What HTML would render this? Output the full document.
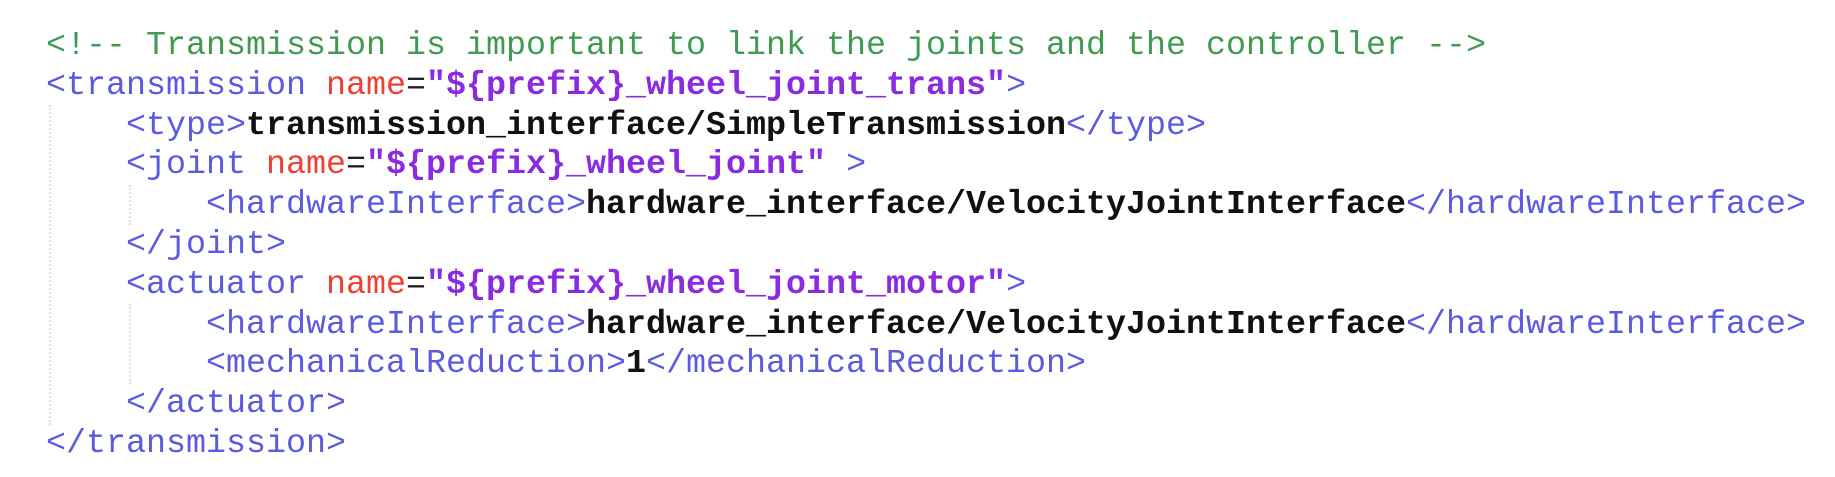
<!DOCTYPE html>
<html><head><meta charset="utf-8"><style>
html,body{margin:0;padding:0;background:#fff;width:1835px;height:477px;overflow:hidden}
pre{position:absolute;left:46px;top:27px;margin:0;font-family:"Liberation Mono","Courier New",monospace;font-size:33.33px;line-height:39.8px;color:#5b5be0;}
.c{color:#3f9a52}.a{color:#ee4033}.s{color:#8a2be2;font-weight:bold}.b{color:#111;font-weight:bold}.e{color:#222}
.g{position:absolute;width:0;border-left:2px dotted #ddd}
</style></head><body>
<div class="g" style="left:49px;top:105px;height:320px"></div>
<div class="g" style="left:129px;top:185px;height:40px"></div>
<div class="g" style="left:129px;top:304px;height:80px"></div>
<pre><span class="c">&lt;!-- Transmission is important to link the joints and the controller --&gt;</span>
&lt;transmission <span class="a">name</span><span class="e">=</span><span class="s">"${prefix}_wheel_joint_trans"</span>&gt;
    &lt;type&gt;<span class="b">transmission_interface/SimpleTransmission</span>&lt;/type&gt;
    &lt;joint <span class="a">name</span><span class="e">=</span><span class="s">"${prefix}_wheel_joint"</span> &gt;
        &lt;hardwareInterface&gt;<span class="b">hardware_interface/VelocityJointInterface</span>&lt;/hardwareInterface&gt;
    &lt;/joint&gt;
    &lt;actuator <span class="a">name</span><span class="e">=</span><span class="s">"${prefix}_wheel_joint_motor"</span>&gt;
        &lt;hardwareInterface&gt;<span class="b">hardware_interface/VelocityJointInterface</span>&lt;/hardwareInterface&gt;
        &lt;mechanicalReduction&gt;<span class="b">1</span>&lt;/mechanicalReduction&gt;
    &lt;/actuator&gt;
&lt;/transmission&gt;</pre>
</body></html>
